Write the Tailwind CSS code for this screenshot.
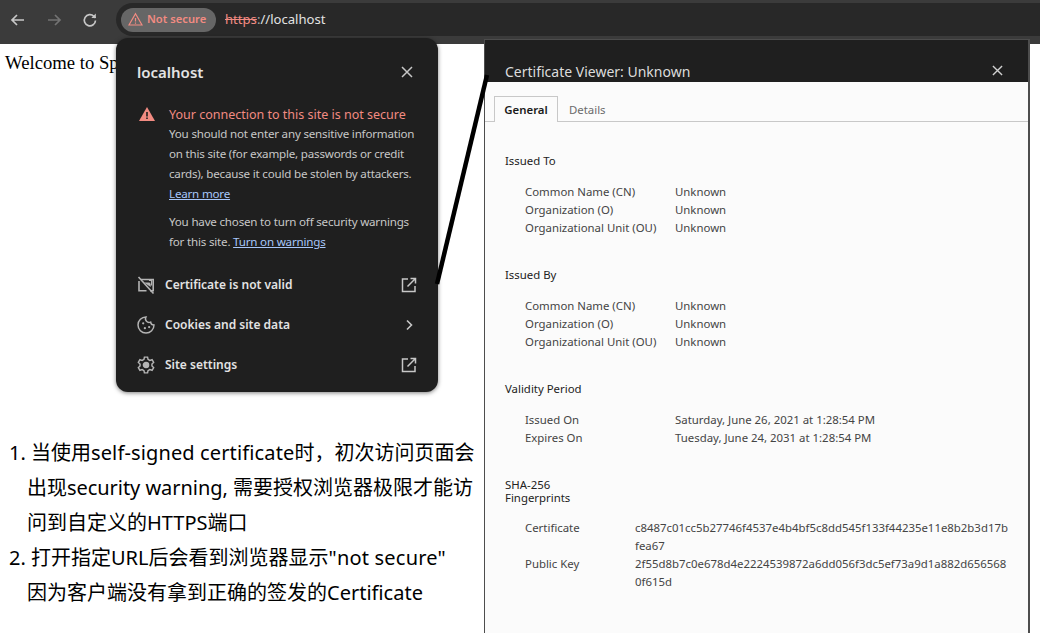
<!DOCTYPE html>
<html lang="zh">
  <head>
    <meta charset="UTF-8" />
    <title>Not secure</title>
    <script src="https://cdn.jsdelivr.net/npm/@tailwindcss/browser@4"></script>
  </head>
  <body class="bg-white">
    <div class="relative w-[1040px] h-[633px] overflow-hidden bg-white font-['Noto_Sans','Noto_Sans_CJK_SC',sans-serif]">
      <!-- browser toolbar -->
      <div class="h-11 bg-[#3b3b3b] flex items-center pl-[9px] pt-[3px] pb-2">
        <div class="flex items-center gap-[18px] text-[#c7c7c7]">
          <svg class="w-[18px] h-[18px]" viewBox="0 0 18 18" fill="none" stroke="currentColor" stroke-width="1.7"><path d="M15 9H3M8 4 3 9l5 5" /></svg>
          <svg class="w-[18px] h-[18px] text-[#737373]" viewBox="0 0 18 18" fill="none" stroke="currentColor" stroke-width="1.7"><path d="M3 9h12M10 4l5 5-5 5" /></svg>
          <svg class="w-[18px] h-[18px]" viewBox="0 0 18 18" fill="none" stroke="currentColor" stroke-width="1.7"><path d="M14.5 9.5a5.6 5.6 0 1 1-1.6-4.2L14.5 7" /><path d="M14.8 2.6V7h-4.4" fill="currentColor" stroke="none" /></svg>
        </div>
        <div class="ml-[17px] flex-1 h-[33px] bg-[#282828] rounded-l-full flex items-center pl-[5px]">
          <div class="h-6 w-[95px] rounded-full bg-[#666666] flex items-center pl-[7px] gap-1 text-[#f28b82]">
            <svg class="w-[15px] h-[15px] shrink-0" viewBox="0 0 15 15" fill="none" stroke="currentColor" stroke-width="1.2"><path d="M7.5 1.8 14 13H1L7.5 1.8Z" /><path d="M7.5 6v3.6M7.5 10.6v1.2" /></svg>
            <span class="text-[11.2px] font-semibold whitespace-nowrap">Not secure</span>
          </div>
          <div class="ml-[9px] text-[13.1px] text-[#e3e3e3] whitespace-nowrap"><span class="text-[#f28b82] line-through">https</span><span class="text-[#a8a8a8]">:</span>//localhost</div>
        </div>
      </div>

      <p class="absolute left-[5px] top-[52px] text-[18.7px] leading-[22px] text-black font-['Liberation_Serif',serif]">Welcome to Spring Boot</p>

      <!-- notes -->
      <ol class="absolute left-[9px] top-[435px] w-[475px] text-[20px] leading-[35px] text-black whitespace-nowrap">
        <li class="pl-[18px] -indent-[18px]">1. 当使用<span class="tracking-[0.13px]">self-signed certificate</span>时，初次访问页面会<br />出现<span class="tracking-[-0.05px]">security warning,</span> 需要授权浏览器极限才能访<br />问到自定义的HTTPS端口</li>
        <li class="pl-[18px] -indent-[18px]">2. 打开指定URL后会看到浏览器显示<span class="tracking-[0.2px]">"not secure"</span><br />因为客户端没有拿到正确的签发的Certificate</li>
      </ol>

      <!-- security popup -->
      <div class="absolute left-[116px] top-[38px] w-[322px] h-[354px] rounded-xl bg-[#1f1f1f] shadow-[0_1px_4px_rgba(0,0,0,0.5)] text-[#c7c7c7]">
        <div class="flex items-center justify-between pl-[21px] pr-[25px] pt-5 h-12">
          <span class="text-[15px] font-semibold text-[#e3e3e3]">localhost</span>
          <svg class="w-3 h-3 text-[#c7c7c7]" viewBox="0 0 12 12" stroke="currentColor" stroke-width="1.5"><path d="M1 1l10 10M11 1 1 11" /></svg>
        </div>
        <div class="flex pl-[23px] pr-4 mt-5">
          <svg class="w-4 h-4 shrink-0 text-[#f28b82]" viewBox="0 0 16 16"><path fill="currentColor" d="M8 1 16 15H0L8 1Z" /><path fill="#1f1f1f" d="M7.2 6h1.6v4.5H7.2zM7.2 11.5h1.6v1.6H7.2z" /></svg>
          <div class="ml-[14px] text-[11.6px] leading-5 tracking-[-0.2px]">
            <p class="text-[12.5px] leading-[18px] tracking-normal text-[#f28b82] whitespace-nowrap">Your connection to this site is not secure</p>
            <p class="whitespace-nowrap">You should not enter any sensitive information<br />on this site (for example, passwords or credit<br />cards), because it could be stolen by attackers.<br /><a class="text-[#a8c7fa] underline">Learn more</a></p>
            <p class="mt-2 whitespace-nowrap">You have chosen to turn off security warnings<br />for this site. <a class="text-[#a8c7fa] underline">Turn on warnings</a></p>
          </div>
        </div>
        <div class="mt-[13px] flex flex-col text-[#e3e3e3] text-[12px] font-semibold">
          <div class="h-10 flex items-center pl-[21px] pr-[21px]">
            <svg class="w-[18px] h-[18px] mr-[10px] text-[#b4b4b4]" viewBox="0 0 18 18" fill="none" stroke="currentColor" stroke-width="1.6"><path d="M4 3.5h12.2v11.2H13M9.5 14.7H2V5" /><path d="M1.5 1 16.5 17.5" /><path d="M7 6.5h5.5l1.2 1.5v3" fill="currentColor" stroke="none" /><path d="M12 4.5h2.5v5" stroke-width="1.2" /></svg>
            <span class="flex-1">Certificate is not valid</span>
            <svg class="w-4 h-4 text-[#c7c7c7]" viewBox="0 0 16 16" fill="none" stroke="currentColor" stroke-width="1.5"><path d="M7 2H1.5v12.5H14V9M9.5 1.5h5v5M14.2 1.8 6.5 9.5" /></svg>
          </div>
          <div class="h-10 flex items-center pl-[21px] pr-[21px]">
            <svg class="w-[18px] h-[18px] mr-[10px] text-[#b4b4b4]" viewBox="0 0 16 16" fill="none" stroke="currentColor" stroke-width="1.3"><path d="M8 .9a7.1 7.1 0 1 0 7.1 7.1 3 3 0 0 1-3-2.6A3.2 3.2 0 0 1 8 .9Z" /><circle cx="5.5" cy="6.5" r="1" fill="currentColor" stroke="none" /><circle cx="7" cy="10.8" r="1" fill="currentColor" stroke="none" /><circle cx="10.8" cy="9.8" r="1" fill="currentColor" stroke="none" /></svg>
            <span class="flex-1">Cookies and site data</span>
            <svg class="w-4 h-4 text-[#c7c7c7]" viewBox="0 0 16 16" fill="none" stroke="currentColor" stroke-width="1.6"><path d="M6 3.5 10.5 8 6 12.5" /></svg>
          </div>
          <div class="h-10 flex items-center pl-[21px] pr-[21px]">
            <svg class="w-[18px] h-[18px] mr-[10px] text-[#b4b4b4]" viewBox="0 0 16 16" fill="none" stroke="currentColor" stroke-width="1.3"><path d="M6.6 1h2.8l.4 2 1.6.9 2-.6 1.4 2.4-1.5 1.4v1.8l1.5 1.4-1.4 2.4-2-.6-1.6.9-.4 2H6.6l-.4-2-1.6-.9-2 .6-1.4-2.4 1.5-1.4V7.1L1.2 5.7l1.4-2.4 2 .6 1.6-.9.4-2Z" /><circle cx="8" cy="8" r="2.3" fill="currentColor" /></svg>
            <span class="flex-1">Site settings</span>
            <svg class="w-4 h-4 text-[#c7c7c7]" viewBox="0 0 16 16" fill="none" stroke="currentColor" stroke-width="1.5"><path d="M7 2H1.5v12.5H14V9M9.5 1.5h5v5M14.2 1.8 6.5 9.5" /></svg>
          </div>
        </div>
      </div>

      <!-- certificate viewer -->
      <div class="absolute left-[484px] top-[39px] w-[546px] h-[600px] border-l border-r-2 border-t border-[#4d4d4d] bg-[#fbfbfb] text-[11.4px]">
        <div class="h-[42px] bg-[#1f1f1f] flex items-end justify-between pl-5 pr-[25px]">
          <span class="text-[14px] leading-[20px] text-[#dcdcdc]">Certificate Viewer: Unknown</span>
          <svg class="w-[11px] h-[11px] mb-[6px] text-[#d0d0d0]" viewBox="0 0 12 12" stroke="currentColor" stroke-width="1.5"><path d="M1 1l10 10M11 1 1 11" /></svg>
        </div>
        <div class="mt-[14px] h-[26px] border-b border-[#c8c8c8] flex pl-[9px]">
          <div class="w-16 h-[26px] border border-b-0 border-[#c8c8c8] bg-[#fbfbfb] font-semibold text-[#1a1a1a] flex items-center justify-center">General</div>
          <div class="ml-[11px] h-[26px] pt-px flex items-center text-[#6b6b6b]">Details</div>
        </div>
        <div class="pl-5 pt-[30px] text-[#444444] leading-[18px]">
          <h3 class="text-[#222222]">Issued To</h3>
          <div class="mt-[13px] pl-5 grid grid-cols-[150px_1fr]">
            <span>Common Name (CN)</span><span>Unknown</span>
            <span>Organization (O)</span><span>Unknown</span>
            <span>Organizational Unit (OU)</span><span>Unknown</span>
          </div>
          <h3 class="mt-[29px] text-[#222222]">Issued By</h3>
          <div class="mt-[13px] pl-5 grid grid-cols-[150px_1fr]">
            <span>Common Name (CN)</span><span>Unknown</span>
            <span>Organization (O)</span><span>Unknown</span>
            <span>Organizational Unit (OU)</span><span>Unknown</span>
          </div>
          <h3 class="mt-[29px] text-[#222222]">Validity Period</h3>
          <div class="mt-[13px] pl-5 grid grid-cols-[150px_1fr]">
            <span>Issued On</span><span>Saturday, June 26, 2021 at 1:28:54 PM</span>
            <span>Expires On</span><span>Tuesday, June 24, 2031 at 1:28:54 PM</span>
          </div>
          <h3 class="mt-[31px] text-[#222222] leading-[13px]">SHA-256<br />Fingerprints</h3>
          <div class="mt-[15px] pl-5 grid grid-cols-[110px_1fr]">
            <span>Certificate</span><span>c8487c01cc5b27746f4537e4b4bf5c8dd545f133f44235e11e8b2b3d17b<br />fea67</span>
            <span>Public Key</span><span>2f55d8b7c0e678d4e2224539872a6dd056f3dc5ef73a9d1a882d656568<br />0f615d</span>
          </div>
        </div>
      </div>

      <!-- callout line -->
      <svg class="absolute left-[430px] top-[70px] w-[64px] h-[220px]" viewBox="0 0 64 220" fill="none"><path d="M57 5 7 214" stroke="#000" stroke-width="4.5" /></svg>
    </div>
  </body>
</html>
